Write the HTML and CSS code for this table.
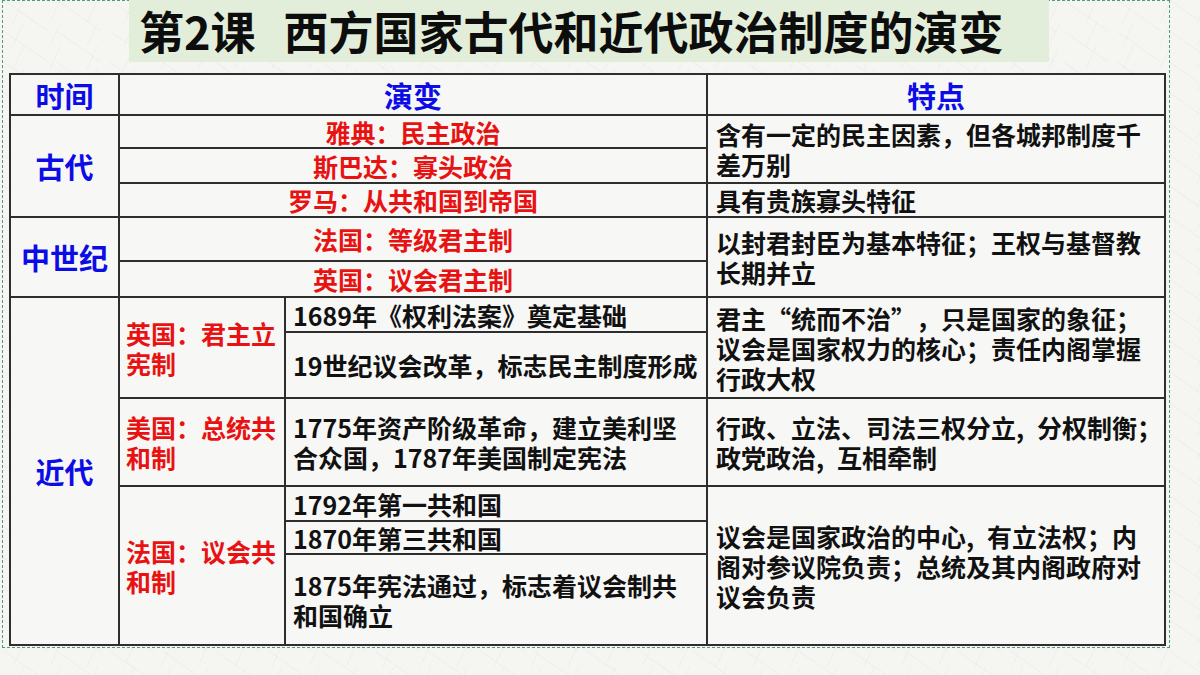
FILE: index.html
```html
<!DOCTYPE html>
<html lang="zh-CN">
<head>
<meta charset="utf-8">
<title>第2课 西方国家古代和近代政治制度的演变</title>
<link rel="stylesheet" href="styles.css">
</head>
<body>
<div class="frame">
  <div class="title"><span class="lesson">第2课</span>西方国家古代和近代政治制度的演变</div>
  <div class="table">
    <div class="cell hd c1 r1"><div class="in">时间</div></div>
    <div class="cell hd c2 r1"><div class="in">演变</div></div>
    <div class="cell hd c3 r1"><div class="in">特点</div></div>

    <div class="cell hd c1 ancient"><div class="in">古代</div></div>
    <div class="cell red ctr c2 r2"><div class="in">雅典：民主政治</div></div>
    <div class="cell red ctr c2 r3"><div class="in">斯巴达：寡头政治</div></div>
    <div class="cell red ctr c2 r4"><div class="in">罗马：从共和国到帝国</div></div>
    <div class="cell txt c3 r23"><div class="in">含有一定的民主因素，但各城邦制度千<br>差万别</div></div>
    <div class="cell txt c3 r4"><div class="in">具有贵族寡头特征</div></div>

    <div class="cell hd c1 medieval"><div class="in">中世纪</div></div>
    <div class="cell red ctr c2 r5"><div class="in">法国：等级君主制</div></div>
    <div class="cell red ctr c2 r6"><div class="in">英国：议会君主制</div></div>
    <div class="cell txt c3 r56"><div class="in">以封君封臣为基本特征；王权与基督教<br>长期并立</div></div>

    <div class="cell hd c1 modern"><div class="in">近代</div></div>
    <div class="cell red c2a r78"><div class="in">英国：君主立<br>宪制</div></div>
    <div class="cell txt c2b r7"><div class="in">1689年《权利法案》奠定基础</div></div>
    <div class="cell txt c2b r8"><div class="in">19世纪议会改革，标志民主制度形成</div></div>
    <div class="cell txt c3 r78"><div class="in">君主<span class="ql">“</span>统而不治<span class="qr">”</span>，只是国家的象征；<br>议会是国家权力的核心；责任内阁掌握<br>行政大权</div></div>

    <div class="cell red c2a r9"><div class="in">美国：总统共<br>和制</div></div>
    <div class="cell txt c2b r9"><div class="in">1775年资产阶级革命，建立美利坚<br>合众国，1787年美国制定宪法</div></div>
    <div class="cell txt c3 r9"><div class="in">行政、立法、司法三权分立<span class="nc">,</span>分权制衡；<br>政党政治<span class="nc">,</span>互相牵制</div></div>

    <div class="cell red c2a r1012"><div class="in">法国：议会共<br>和制</div></div>
    <div class="cell txt c2b r10"><div class="in">1792年第一共和国</div></div>
    <div class="cell txt c2b r11"><div class="in">1870年第三共和国</div></div>
    <div class="cell txt c2b r12"><div class="in">1875年宪法通过，标志着议会制共<br>和国确立</div></div>
    <div class="cell txt c3 r1012"><div class="in">议会是国家政治的中心<span class="nc">,</span>有立法权；内<br>阁对参议院负责；总统及其内阁政府对<br>议会负责</div></div>
  </div>
</div>
</body>
</html>
```

FILE: styles.css
```css
html, body {
  margin: 0;
  padding: 0;
}

body {
  width: 1200px;
  height: 675px;
  overflow: hidden;
  background-color: #f5f5f2;
  background-image:
    linear-gradient(115deg, transparent 48%, rgba(200,200,195,0.22) 49%, transparent 51%),
    linear-gradient(35deg, transparent 48%, rgba(200,200,195,0.18) 49%, transparent 51%);
  background-size: 37px 23px, 53px 31px;
  font-family: "Noto Sans CJK SC", "Noto Sans", sans-serif;
}

.frame {
  box-sizing: border-box;
  margin-left: 2px;
  width: 1168px;
  height: 648px;
  border: 1px dashed #4e9a84;
}

.title {
  margin-left: 126px;
  width: 920px;
  height: 62px;
  margin-top: -1px;
  background: #e2eed9;
  box-sizing: border-box;
  padding-left: 10px;
  font-size: 45px;
  font-weight: 700;
  line-height: 62px;
  color: #0d0d0d;
  white-space: nowrap;
}

.lesson {
  margin-right: 28px;
}

.table {
  margin-top: 11px;
  margin-left: 6px;
  width: 1157px;
  box-sizing: border-box;
  padding: 2px;
  gap: 2px;
  background: #2e2e2e;
  display: grid;
  grid-template-columns: 107px 164px 420px 456px;
  grid-template-rows: 39px 31px 33px 32px 42px 34px 33px 64px 86px 33px 31px 89px;
}

.cell {
  background: #f7f7f5;
  display: flex;
  align-items: center;
  font-weight: 700;
  font-size: 25px;
  line-height: 30px;
  white-space: nowrap;
}

.in {
  flex: 1;
}

.hd {
  color: #0c0ce6;
  font-size: 29px;
  text-align: center;
}

.red {
  color: #e81212;
  padding-left: 6px;
}

.ctr {
  text-align: center;
  padding-left: 0;
}

.txt {
  color: #111;
  padding-left: 7px;
}

.c3.txt {
  padding-left: 8px;
}

.nc {
  display: inline-block;
  width: 21px;
}

.ql {
  display: inline-block;
  width: 25px;
  text-align: right;
}

.qr {
  display: inline-block;
  width: 25px;
  text-align: left;
}

/* columns */
.c1 { grid-column: 1; }
.c2 { grid-column: 2 / 4; }
.c2a { grid-column: 2; }
.c2b { grid-column: 3; }
.c3 { grid-column: 4; }

/* rows */
.r1 { grid-row: 1; }
.r2 { grid-row: 2; }
.r3 { grid-row: 3; }
.r4 { grid-row: 4; }
.r5 { grid-row: 5; }
.r6 { grid-row: 6; }
.r7 { grid-row: 7; }
.r8 { grid-row: 8; }
.r9 { grid-row: 9; }
.r10 { grid-row: 10; }
.r11 { grid-row: 11; }
.r12 { grid-row: 12; }
.r23 { grid-row: 2 / 4; }
.r56 { grid-row: 5 / 7; }
.r78 { grid-row: 7 / 9; }
.r1012 { grid-row: 10 / 13; }

.ancient { grid-row: 2 / 5; }
.medieval { grid-row: 5 / 7; }
.modern { grid-row: 7 / 13; }
```
